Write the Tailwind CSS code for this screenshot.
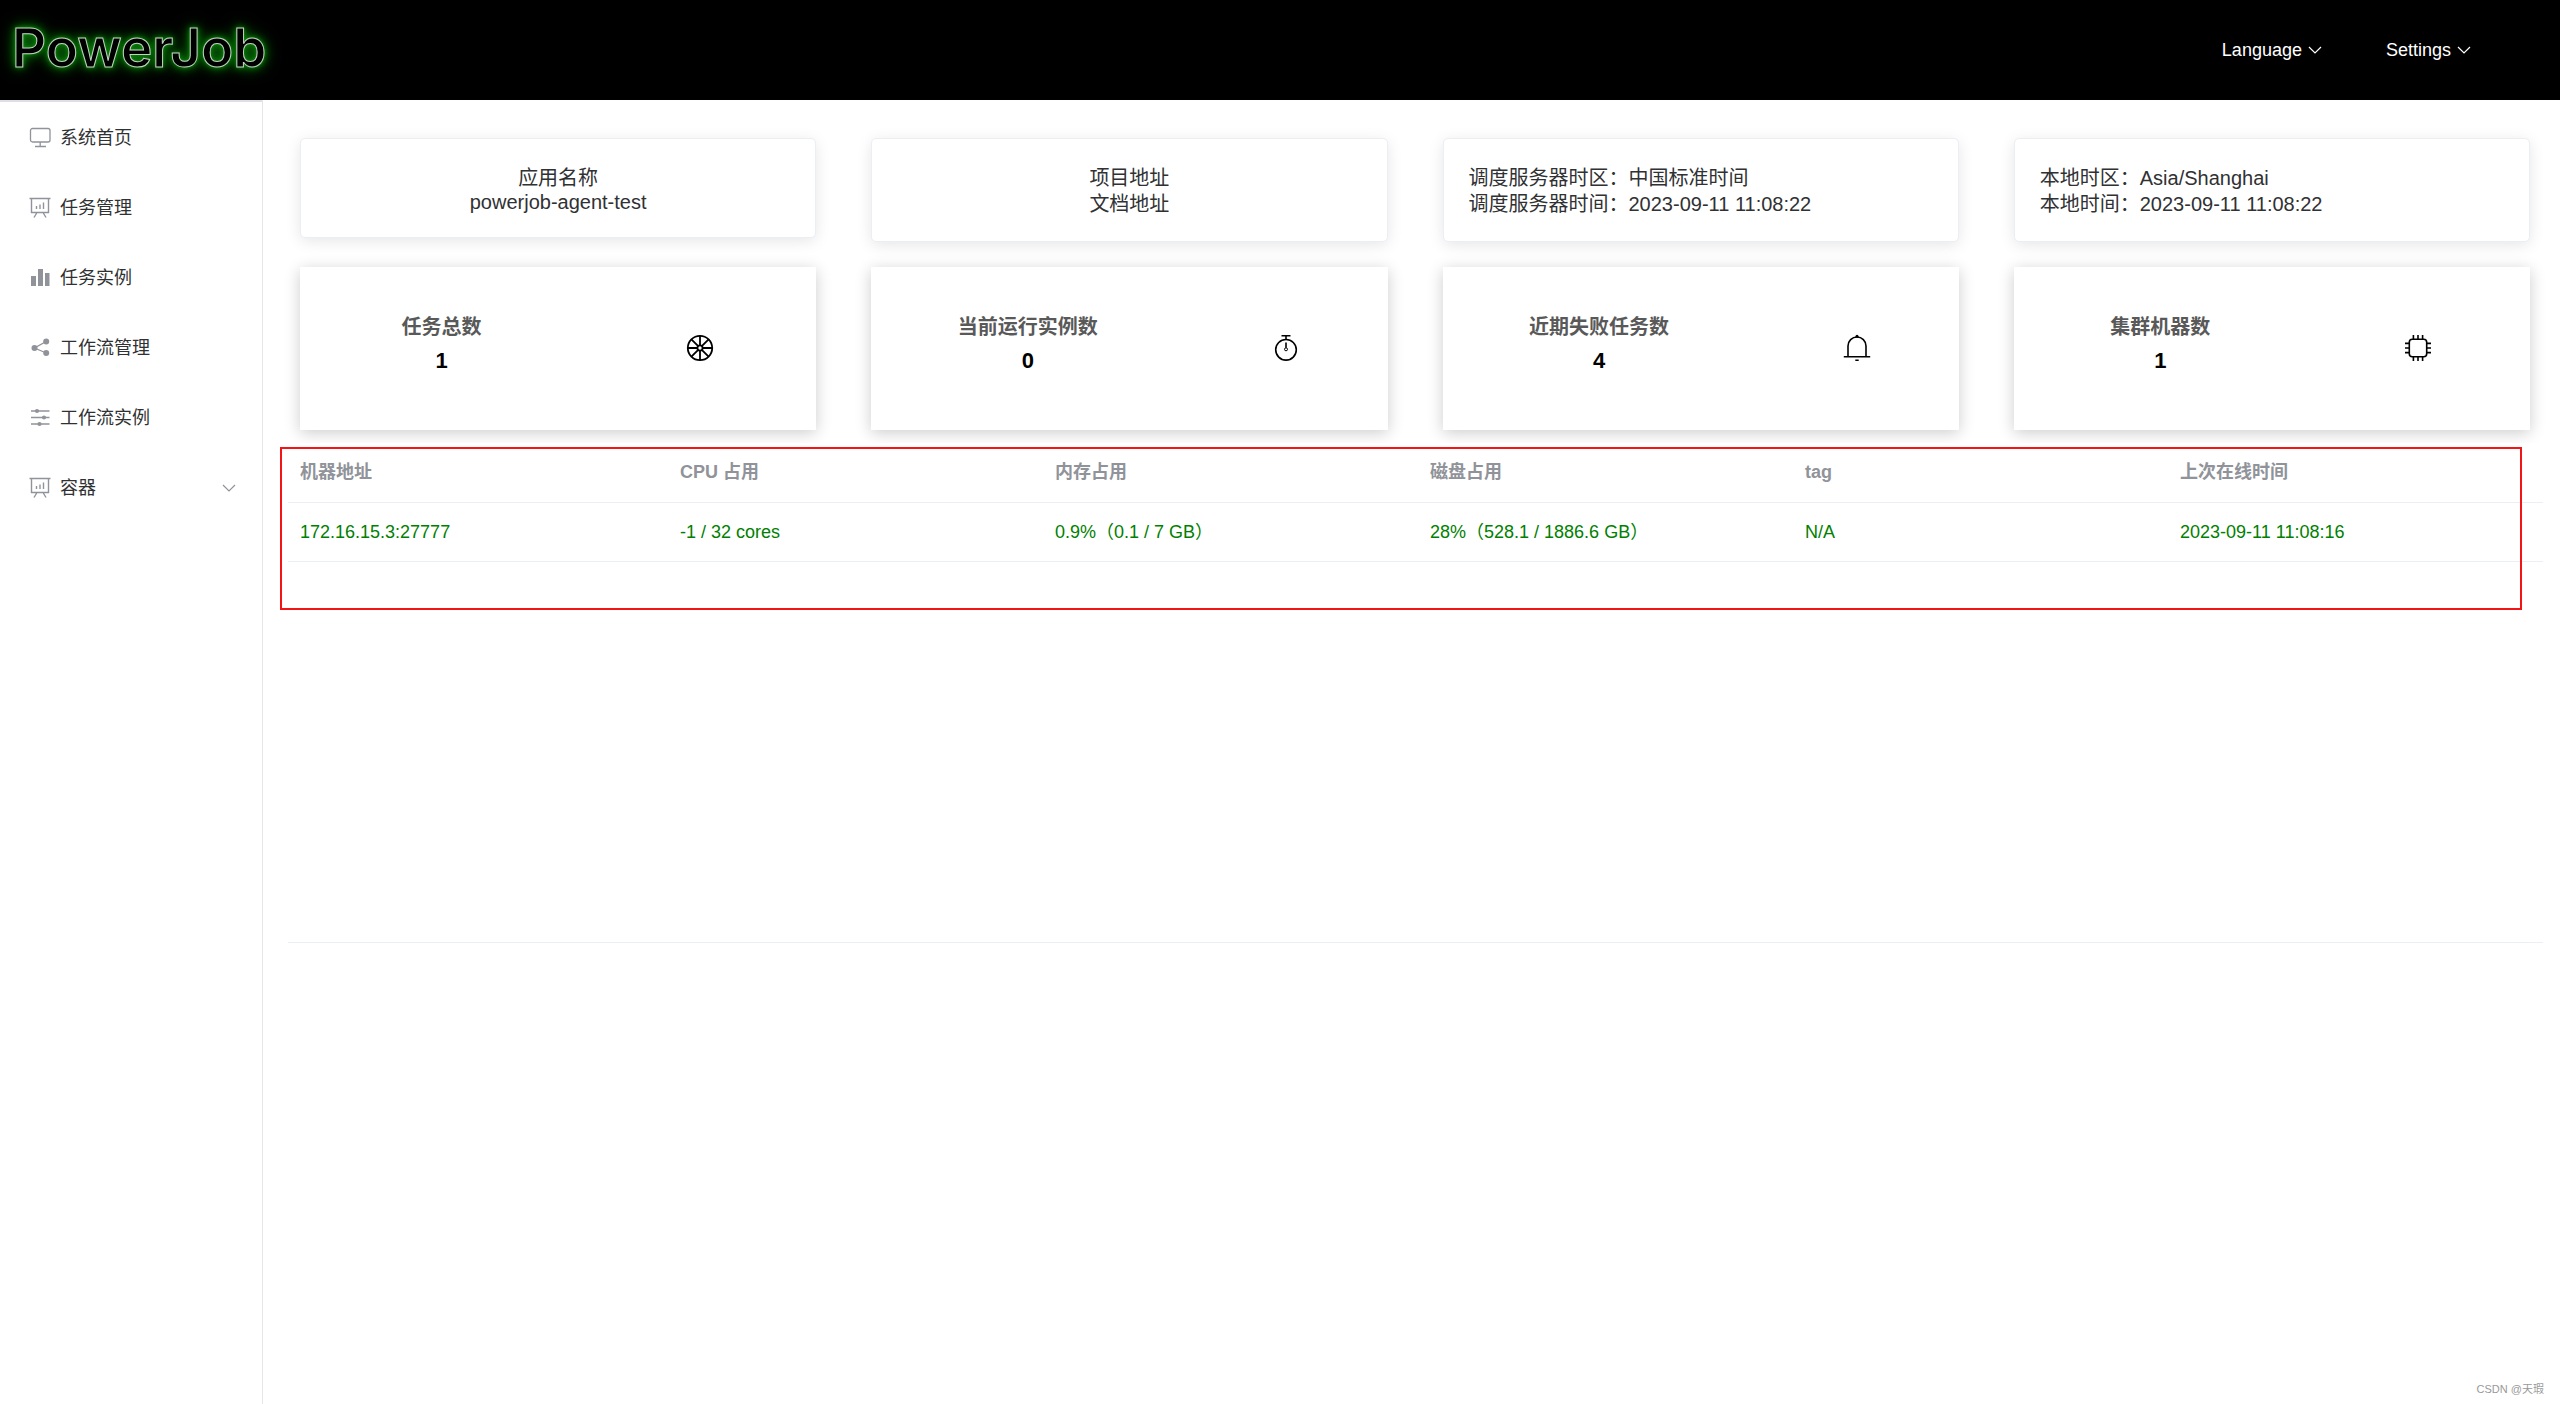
<!DOCTYPE html>
<html lang="zh-CN">
<head>
<meta charset="utf-8">
<meta name="viewport" content="width=device-width, initial-scale=1">
<title>PowerJob</title>
<script src="https://cdn.jsdelivr.net/npm/@tailwindcss/browser@4"></script>
</head>
<body class="flex min-h-screen flex-col bg-white font-['Liberation_Sans','Noto_Sans_CJK_SC',sans-serif] text-[#303133]">

<svg class="hidden" aria-hidden="true">
  <symbol id="board" viewBox="0 0 24 24">
    <g fill="none" stroke="currentColor" stroke-width="1.4">
      <path d="M1.500 2.500h21M3.500 2.500v14h17v-14M9 16.500l-3 5M15 16.500l3 5"/>
      <path d="M8.500 10v3M12 8.500v4.500M15.500 6.500v6.500"/>
    </g>
  </symbol>
  <symbol id="chevron" viewBox="0 0 14 14">
    <path d="M1 4l6 6 6-6" fill="none" stroke="currentColor" stroke-width="1.2"/>
  </symbol>
</svg>

<header class="flex h-[100px] shrink-0 items-center justify-between bg-black pr-[89px] pl-3">
  <a href="#" class="pb-1 font-['Inter',sans-serif] text-[53px] leading-[60px] font-semibold text-black [-webkit-text-stroke:1px_#c4d2c4] [text-shadow:0_0_4px_#0a8a0a,0_0_8px_#0a8a0a,0_0_16px_#0a8a0a]">PowerJob</a>
  <div class="flex gap-16 text-[18px] text-white">
    <button type="button" class="flex items-center gap-1.5">Language<svg class="size-3.5"><use href="#chevron"/></svg></button>
    <button type="button" class="flex items-center gap-1.5">Settings<svg class="size-3.5"><use href="#chevron"/></svg></button>
  </div>
</header>

<div class="flex flex-1">
  <aside class="w-[263px] shrink-0 border-r border-[#e6e6e6]">
    <nav class="border-t-2 border-[#dcdfe6] text-[18px] text-[#303133]">
      <a href="#" class="flex h-[70px] items-center gap-2 pt-0.5 pl-7">
        <svg class="size-6 text-[#909399]" viewBox="0 0 24 24" fill="none" stroke="currentColor" stroke-width="1.3"><rect x="2.500" y="2.500" width="19.500" height="13.500" rx="2"/><path d="M12.200 16v4M7 20.500h11"/></svg>
        系统首页</a>
      <a href="#" class="flex h-[70px] items-center gap-2 pt-0.5 pl-7">
        <svg class="size-6 text-[#909399]"><use href="#board"/></svg>
        任务管理</a>
      <a href="#" class="flex h-[70px] items-center gap-2 pt-0.5 pl-7">
        <svg class="size-6 text-[#909399]" viewBox="0 0 24 24" fill="currentColor"><path d="M3 10h5v10H3zM10 3h5v17h-5zM17 7h4.500v13H17z"/></svg>
        任务实例</a>
      <a href="#" class="flex h-[70px] items-center gap-2 pt-0.5 pl-7">
        <svg class="size-6 text-[#909399]" viewBox="0 0 24 24" fill="currentColor"><circle cx="6.500" cy="12" r="3"/><circle cx="18.200" cy="5.500" r="3"/><circle cx="18.200" cy="17" r="3"/><path d="M18.200 5.500L6.500 12l11.700 5" fill="none" stroke="currentColor" stroke-width="1.300"/></svg>
        工作流管理</a>
      <a href="#" class="flex h-[70px] items-center gap-2 pt-0.5 pl-7">
        <svg class="size-6 text-[#909399]" viewBox="0 0 24 24" fill="currentColor"><path d="M3 5h18.500M3 11.500h18.500M3 18h18.500" stroke="currentColor" stroke-width="1.300"/><circle cx="9" cy="5" r="2.100"/><circle cx="16" cy="11.500" r="2.100"/><circle cx="11.500" cy="18" r="2.100"/></svg>
        工作流实例</a>
      <a href="#" class="flex h-[70px] items-center gap-2 pt-0.5 pr-[26px] pl-7">
        <svg class="size-6 text-[#909399]"><use href="#board"/></svg>
        容器
        <svg class="ml-auto size-3.5 text-[#909399]"><use href="#chevron"/></svg></a>
    </nav>
  </aside>

  <main class="flex min-w-0 flex-1 flex-col pt-[38px]">
    <section class="grid grid-cols-4 items-start gap-x-[55px] gap-y-[25px] pr-[30px] pl-[37px] text-[20px] leading-[26px]">
      <div class="rounded-[5px] border border-[#ebeef5] bg-white px-[25px] pt-[26px] pb-6 text-center shadow-[0_3px_15px_rgba(0,0,0,0.1)]">
        <p>应用名称</p>
        <p class="leading-[22px]">powerjob-agent-test</p>
      </div>
      <div class="flex flex-col items-center rounded-[5px] border border-[#ebeef5] bg-white px-[25px] pt-[26px] pb-6 shadow-[0_3px_15px_rgba(0,0,0,0.1)]">
        <a href="#">项目地址</a>
        <a href="#">文档地址</a>
      </div>
      <div class="rounded-[5px] border border-[#ebeef5] bg-white px-[25px] pt-[26px] pb-6 shadow-[0_3px_15px_rgba(0,0,0,0.1)]">
        <p>调度服务器时区：中国标准时间</p>
        <p>调度服务器时间：2023-09-11 11:08:22</p>
      </div>
      <div class="rounded-[5px] border border-[#ebeef5] bg-white px-[25px] pt-[26px] pb-6 shadow-[0_3px_15px_rgba(0,0,0,0.1)]">
        <p>本地时区：Asia/Shanghai</p>
        <p>本地时间：2023-09-11 11:08:22</p>
      </div>

      <div class="flex justify-around bg-white pt-[47px] pb-14 shadow-[0_3px_15px_rgba(0,0,0,0.2)]">
        <div class="flex flex-col items-center gap-2 font-bold"><p class="text-[#595959]">任务总数</p><p class="text-[22px] text-black">1</p></div>
        <svg class="mt-[19px] size-[30px] text-black" viewBox="-1 -1 30 30" fill="none" stroke="currentColor" stroke-width="1.800"><circle cx="14" cy="14" r="12.200"/><circle cx="14" cy="14" r="2.600"/><path d="M14 1.800v9.600M14 16.600v9.600M1.800 14h9.600M16.600 14h9.600M5.400 5.400l6.800 6.800M15.800 15.800l6.800 6.800M22.600 5.400l-6.800 6.800M12.200 15.800l-6.800 6.800"/></svg>
      </div>
      <div class="flex justify-around bg-white pt-[47px] pb-14 shadow-[0_3px_15px_rgba(0,0,0,0.2)]">
        <div class="flex flex-col items-center gap-2 font-bold"><p class="text-[#595959]">当前运行实例数</p><p class="text-[22px] text-black">0</p></div>
        <svg class="mt-[19px] size-[30px] text-black" viewBox="-1 -1 30 30" fill="none" stroke="currentColor" stroke-width="1.600"><circle cx="14" cy="15.800" r="10.300"/><path d="M9.500 1.800h9M14 1.800v3.700M14 8.500v5.200"/><circle cx="14" cy="15.300" r="1.500" stroke-width="1"/></svg>
      </div>
      <div class="flex justify-around bg-white pt-[47px] pb-14 shadow-[0_3px_15px_rgba(0,0,0,0.2)]">
        <div class="flex flex-col items-center gap-2 font-bold"><p class="text-[#595959]">近期失败任务数</p><p class="text-[22px] text-black">4</p></div>
        <svg class="mt-[19px] size-[30px] text-black" viewBox="-1 -1 30 30" fill="none" stroke="currentColor" stroke-width="1.600"><path d="M5 22.700V12a9 9 0 0 1 18 0v10.700M.8 22.700h26.400M12.300 26.200h3.400"/><circle cx="14" cy="2.300" r="1.500" fill="currentColor" stroke="none"/></svg>
      </div>
      <div class="flex justify-around bg-white pt-[47px] pb-14 shadow-[0_3px_15px_rgba(0,0,0,0.2)]">
        <div class="flex flex-col items-center gap-2 font-bold"><p class="text-[#595959]">集群机器数</p><p class="text-[22px] text-black">1</p></div>
        <svg class="mt-[19px] size-[30px] text-black" viewBox="-1 -1 30 30" fill="none" stroke="currentColor" stroke-width="1.600"><rect x="5.300" y="5.300" width="17.400" height="17.400" rx="3"/><path d="M9.400 1v4M14 1v4M18.600 1v4M9.400 23v4M14 23v4M18.600 23v4M1 9.400h4M1 14h4M1 18.600h4M23 9.400h4M23 14h4M23 18.600h4"/></svg>
      </div>
    </section>

    <section class="relative mt-[13px] mr-[17px] ml-[25px] min-h-[500px] border-b border-[#ebeef5] bg-white">
      <table class="w-full table-fixed text-left text-[18px] leading-[28px]">
        <thead class="text-[#909399]">
          <tr class="h-[59px] border-b border-[#ebeef5]">
            <th class="w-[380px] px-3 font-bold">机器地址</th>
            <th class="px-3 font-bold">CPU 占用</th>
            <th class="px-3 font-bold">内存占用</th>
            <th class="px-3 font-bold">磁盘占用</th>
            <th class="px-3 font-bold">tag</th>
            <th class="px-3 font-bold">上次在线时间</th>
          </tr>
        </thead>
        <tbody class="text-[#008000]">
          <tr class="h-[59px] border-b border-[#ebeef5]">
            <td class="px-3">172.16.15.3:27777</td>
            <td class="px-3">-1 / 32 cores</td>
            <td class="px-3">0.9%（0.1 / 7 GB）</td>
            <td class="px-3">28%（528.1 / 1886.6 GB）</td>
            <td class="px-3">N/A</td>
            <td class="px-3">2023-09-11 11:08:16</td>
          </tr>
        </tbody>
      </table>
      <!-- highlight frame over the machine list -->
      <div class="pointer-events-none absolute top-1 right-[21px] -left-2 h-[163px] border-2 border-[#f31515]"></div>
    </section>

    <footer class="mt-auto pr-4 pb-1.5 text-right text-[11px] leading-[18px] text-[#999999]">CSDN @天瑕</footer>
  </main>
</div>
</body>
</html>
